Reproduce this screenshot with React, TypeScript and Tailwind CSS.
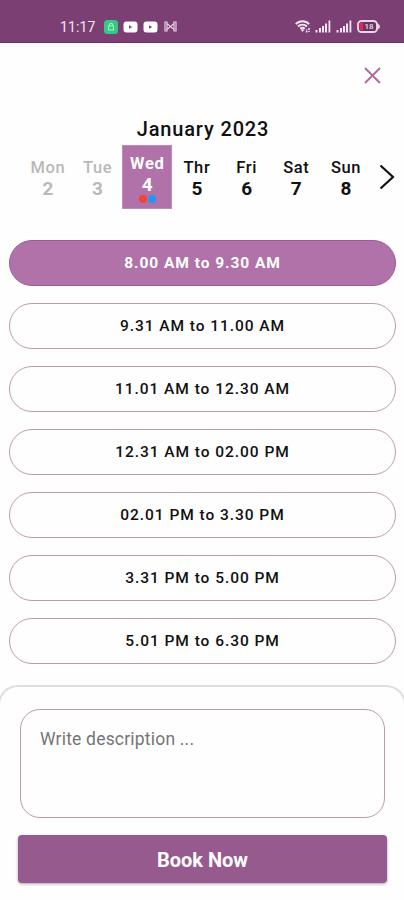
import { useState } from "react";

type Day = {
  name: string;
  date: number;
  past?: boolean;
};

const days: Day[] = [
  { name: "Mon", date: 2, past: true },
  { name: "Tue", date: 3, past: true },
  { name: "Wed", date: 4 },
  { name: "Thr", date: 5 },
  { name: "Fri", date: 6 },
  { name: "Sat", date: 7 },
  { name: "Sun", date: 8 },
];

const slots = [
  "8.00 AM to 9.30 AM",
  "9.31 AM to 11.00 AM",
  "11.01 AM to 12.30 AM",
  "12.31 AM to 02.00 PM",
  "02.01 PM to 3.30 PM",
  "3.31 PM to 5.00 PM",
  "5.01 PM to 6.30 PM",
];

function VideoIcon() {
  return (
    <svg width="15" height="12" viewBox="0 0 15 12">
      <rect x="0.5" y="0.5" width="14" height="11" rx="3" fill="#fff" />
      <path d="M6 4.3v3.4L9.2 6z" fill="#7b3f74" />
    </svg>
  );
}

function SignalIcon() {
  return (
    <svg width="16" height="13" viewBox="0 0 16 13" fill="#f3e4f1">
      <rect x="0.5" y="10" width="2" height="2.5" />
      <rect x="4" y="8" width="2" height="4.5" />
      <rect x="7" y="6" width="2" height="6.5" />
      <rect x="10" y="3.5" width="2" height="9" />
      <rect x="13.5" y="0.5" width="1.8" height="12" />
    </svg>
  );
}

function StatusBar() {
  return (
    <div className="h-[43px] bg-[#7b3f74] border-b border-[#6b2f65] flex items-start justify-between pt-[19px] pl-[60px] pr-[24px]">
      <div className="flex items-center h-[15px]">
        <span className="w-[44px] text-[14px] leading-none tracking-[0.1px] text-[#f5e6f3]">
          11:17
        </span>
        <svg width="14" height="14" viewBox="0 0 14 14">
          <rect width="14" height="14" rx="3.5" fill="#35c985" />
          <path
            d="M4.5 6h5v4h-5zM5.5 6V4.8a1.5 1.5 0 0 1 3 0V6"
            fill="none"
            stroke="#a5f0cd"
            strokeWidth="1.1"
          />
        </svg>
        <div className="flex gap-[5px] ml-[5px]">
          <VideoIcon />
          <VideoIcon />
        </div>
        <svg width="13" height="11" viewBox="0 0 13 11" className="ml-[6px]">
          <path
            d="M1 1h2v9H1zM10 1h2v9h-2zM3 2.5l3.5 3.2L10 2.5M3 8.5l3.5-3L10 8.5"
            fill="none"
            stroke="#e8cfe5"
            strokeWidth="1.2"
          />
        </svg>
      </div>
      <div className="flex items-center h-[15px]">
        <svg width="16" height="13" viewBox="0 0 16 13" className="mr-[4px]">
          <g fill="none" stroke="#f3e4f1" strokeWidth="1.9">
            <path d="M0.8 4.2C4.5 0.2 10.5 0.2 14.2 4.2" />
            <path d="M3 6.5C5.4 4 9.6 4 12 6.5" />
            <path d="M5.2 8.7c1.3-1.3 3.3-1.3 4.6 0" />
          </g>
          <path d="M5.5 9.2h4L7.5 12z" fill="#f3e4f1" />
          <path
            d="M11.6 12.5V9M14 8v4"
            stroke="#f3e4f1"
            strokeWidth="1.6"
            strokeDasharray="2 1"
          />
        </svg>
        <SignalIcon />
        <span className="w-[5px]" />
        <SignalIcon />
        <div className="relative ml-[5px]">
          <svg width="23" height="13" viewBox="0 0 23 13">
            <rect x="1" y="1" width="19" height="11" rx="3.5" fill="#66345f" stroke="#ead5e8" strokeWidth="1.9" />
            <path d="M4 2.5h2.2v8H4a1.8 1.8 0 0 1-1.8-1.8V4.3A1.8 1.8 0 0 1 4 2.5z" fill="#d52c57" />
            <path d="M20 3v7l2.8-2.2V5.2z" fill="#ead5e8" />
          </svg>
          <span className="absolute inset-y-0 left-[3px] w-[18px] text-center text-[8px] leading-[13px] font-medium text-[#f0dced]">
            18
          </span>
        </div>
      </div>
    </div>
  );
}

export default function App() {
  const [selectedDate, setSelectedDate] = useState(4);
  const [selectedSlot, setSelectedSlot] = useState(0);
  const [description, setDescription] = useState("");

  return (
    <div className="h-[900px] w-full overflow-hidden bg-[#fefefe] font-['Roboto',sans-serif] text-[#111] flex flex-col">
      <StatusBar />

      {/* Close button */}
      <div className="flex justify-end pt-[24px] pr-[23px]">
        <button aria-label="Close">
          <svg width="17" height="17" viewBox="0 0 17 17" className="block">
            <path d="M1 1l15 15M16 1L1 16" stroke="#a969a3" strokeWidth="1.8" />
          </svg>
        </button>
      </div>

      <h1 className="mt-[33px] pl-[2px] text-center text-[20px] leading-6 font-medium tracking-[0.85px]">
        January 2023
      </h1>

      {/* Week strip */}
      <div className="mt-[4px] pl-[23px] flex items-center h-[64px]">
        {days.map((d) => {
          const active = d.date === selectedDate;
          return (
            <button
              key={d.date}
              onClick={() => setSelectedDate(d.date)}
              className={`w-[49.7px] h-[64px] shrink-0 flex flex-col items-center ${
                active
                  ? "bg-[#b072a9] border border-[#c08bba] text-white font-bold pt-[7px]"
                  : d.past
                    ? "text-[#b9b9b9] font-medium pt-[12px]"
                    : "font-medium pt-[12px]"
              }`}
            >
              <span className="text-[16.5px] leading-[21px] tracking-[0.6px]">
                {d.name}
              </span>
              <span className="text-[19px] leading-[21px] font-bold">
                {d.date}
              </span>
              {active && (
                <span className="flex gap-[1px]">
                  <span className="size-[8px] rounded-full bg-[#f44336]" />
                  <span className="size-[8px] rounded-full bg-[#2196f3]" />
                </span>
              )}
            </button>
          );
        })}
        <svg width="16" height="26" viewBox="0 0 16 26" className="ml-[8px] shrink-0">
          <path d="M1.5 1.5L14 13L1.5 24.5" fill="none" stroke="#111" strokeWidth="2.2" />
        </svg>
      </div>

      {/* Time slots */}
      <div className="mt-[31px] pl-[9px] pr-[8px] flex flex-col gap-[17px]">
        {slots.map((slot, i) => (
          <button
            key={slot}
            onClick={() => setSelectedSlot(i)}
            className={`h-[46px] shrink-0 rounded-full border pt-[2px] text-[15.5px] tracking-[0.95px] ${
              i === selectedSlot
                ? "bg-[#b072a9] border-[#a05799] text-white font-bold"
                : "border-[#bc9bb2] font-medium"
            }`}
          >
            {slot}
          </button>
        ))}
      </div>

      {/* Bottom sheet */}
      <div className="mt-[21px] -mx-[2px] flex-1 rounded-t-[20px] border-t-2 border-x-2 border-[#dedede] pt-[22px] px-[18px]">
        <textarea
          value={description}
          onChange={(e) => setDescription(e.target.value)}
          placeholder="Write description ..."
          className="block ml-[2px] w-[365px] h-[109px] resize-none rounded-[20px] border border-[#bc9bb2] px-[19px] pt-[17px] text-[17.5px] leading-6 tracking-[0.2px] placeholder:text-[#757575] focus:outline-none"
        />
        <button className="mt-[17px] w-[369px] h-[48px] rounded-[4px] bg-[#965a8e] pt-px text-white text-[20px] font-bold shadow-[0_1px_3px_rgba(0,0,0,0.35)]">
          Book Now
        </button>
      </div>
    </div>
  );
}
